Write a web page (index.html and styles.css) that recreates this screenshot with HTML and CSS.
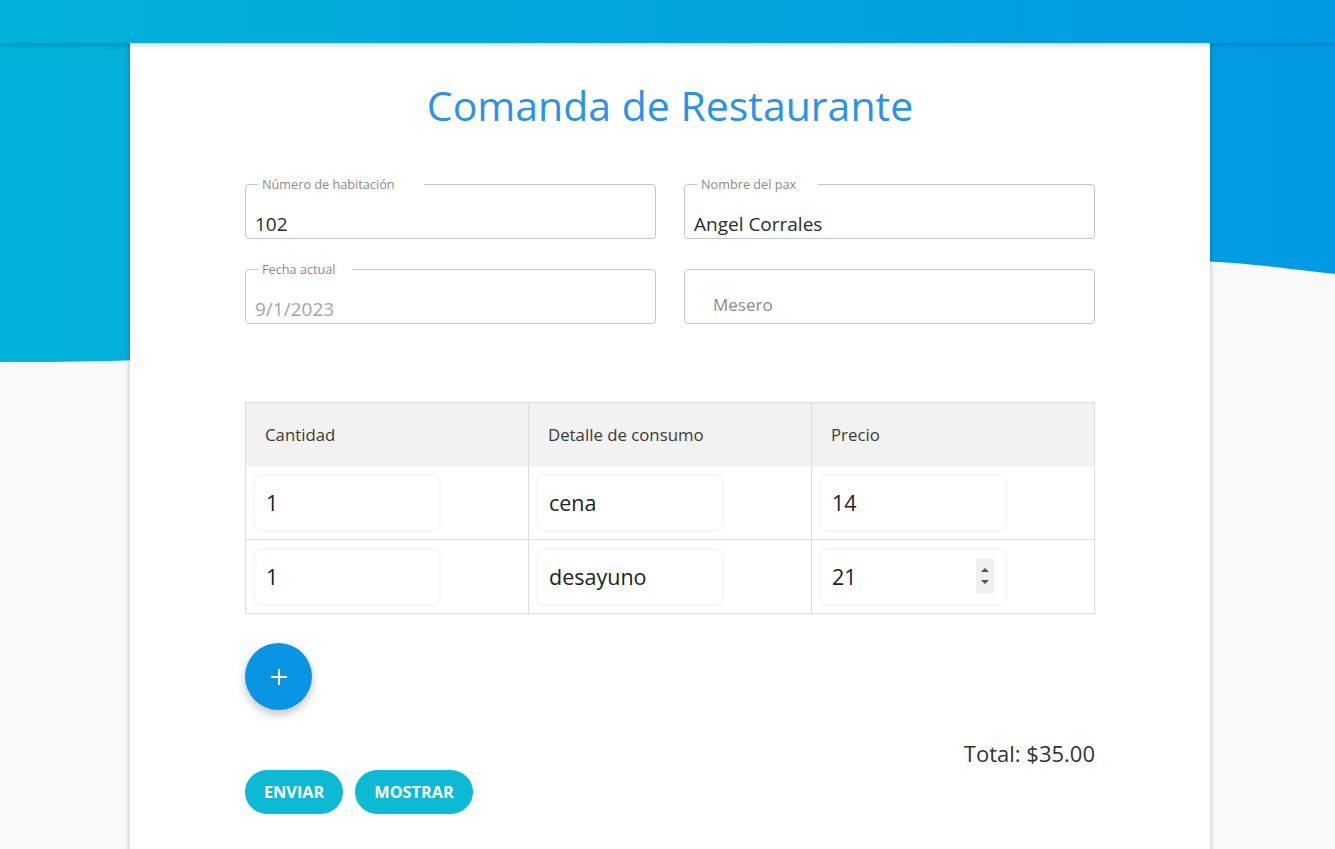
FILE: index.html
```html
<!DOCTYPE html>
<html lang="es">
<head>
<meta charset="utf-8">
<title>Comanda de Restaurante</title>
<link rel="stylesheet" href="styles.css">
</head>
<body>
<svg class="wave" viewBox="0 0 1335 380" preserveAspectRatio="none" aria-hidden="true">
  <defs>
    <linearGradient id="g" x1="0" y1="0" x2="1" y2="0">
      <stop offset="0" stop-color="#02b2d9"/>
      <stop offset="1" stop-color="#029ae3"/>
    </linearGradient>
  </defs>
  <path d="M0,0 H1335 V274 C1260,266 1220,258 1150,262 C800,285 400,365 0,362 Z" fill="url(#g)"/>
</svg>
<header class="topbar"></header>
<main class="card">
  <h1 class="title">Comanda de Restaurante</h1>
  <div class="fields">
    <fieldset class="field">
      <legend class="field-label field-label--wide"><span>Número de habitación</span></legend>
      <div class="field-value">102</div>
    </fieldset>
    <fieldset class="field">
      <legend class="field-label"><span>Nombre del pax</span></legend>
      <div class="field-value">Angel Corrales</div>
    </fieldset>
    <fieldset class="field">
      <legend class="field-label field-label--narrow"><span>Fecha actual</span></legend>
      <div class="field-value field-value--disabled">9/1/2023</div>
    </fieldset>
    <fieldset class="field field--plain">
      <div class="field-placeholder">Mesero</div>
    </fieldset>
  </div>

  <table class="items">
    <thead>
      <tr><th>Cantidad</th><th>Detalle de consumo</th><th>Precio</th></tr>
    </thead>
    <tbody>
      <tr>
        <td><div class="cell-input">1</div></td>
        <td><div class="cell-input">cena</div></td>
        <td><div class="cell-input">14</div></td>
      </tr>
      <tr>
        <td><div class="cell-input">1</div></td>
        <td><div class="cell-input">desayuno</div></td>
        <td><div class="cell-input cell-input--number">21
          <span class="spinner"><span class="spin-up"></span><span class="spin-down"></span></span>
        </div></td>
      </tr>
    </tbody>
  </table>

  <button class="fab" aria-label="Agregar">
    <svg width="20" height="20" viewBox="0 0 20 20"><path d="M10 2 V18 M2 10 H18" stroke="#fff" stroke-width="2"/></svg>
  </button>

  <div class="total">Total: $35.00</div>

  <div class="actions">
    <button class="pill">ENVIAR</button>
    <button class="pill">MOSTRAR</button>
  </div>
</main>
</body>
</html>
```
FILE: styles.css
```css
* { box-sizing: border-box; }
html, body { margin: 0; padding: 0; }
body {
  background: #f9f9f9;
  font-family: "Open Sans", "Noto Sans", sans-serif;
  color: #333;
  min-height: 849px;
  position: relative;
  overflow: hidden;
}
.wave {
  position: absolute;
  left: 0;
  top: 0;
  width: 1335px;
  height: 380px;
  z-index: 0;
}
.topbar {
  position: relative;
  z-index: 2;
  height: 43px;
  background: linear-gradient(90deg, #02b2d9, #029ae3);
  box-shadow: 0 2px 5px rgba(0,0,0,0.18);
}
.card {
  position: relative;
  z-index: 1;
  width: 1080px;
  margin: 0 0 0 130px;
  background: #fff;
  box-shadow: 0 0 6px rgba(0,0,0,0.25);
  padding: 32px 115px 40px;
  min-height: 830px;
}
.title {
  margin: 0;
  text-align: center;
  font-weight: 400;
  font-size: 41px;
  line-height: 60px;
  color: #2a93e6;
}
.fields {
  margin-top: 49px;
  display: grid;
  grid-template-columns: 411px 411px;
  column-gap: 28px;
  row-gap: 30px;
}
.field {
  margin: 0;
  border: 1px solid #c4c4c4;
  border-radius: 4px;
  height: 63px;
  padding: 0 9px;
  position: relative;
  margin-top: -8px;
}
.field-label {
  padding: 0 22px 0 4px;
  margin-left: 3px;
  font-size: 12.7px;
  line-height: 16px;
  color: #8a8a8a;
}
.field-label--wide { padding-right: 29px; }
.field-label--narrow { padding-right: 16px; }
.field-value {
  font-size: 19px;
  line-height: 26px;
  margin-top: 19px;
  color: #2b2b2b;
}
.field-value--disabled { color: #a5a5a5; }
.field--plain {
  margin-top: 0;
  height: 55px;
}
.field-placeholder {
  font-size: 17px;
  line-height: 22px;
  color: #8a8a8a;
  padding-left: 19px;
  margin-top: 24px;
}
.items {
  margin-top: 78px;
  width: 850px;
  border-collapse: collapse;
  table-layout: fixed;
}
.items th, .items td {
  border: 1px solid #dcdcdc;
  width: 283px;
}
.items thead th {
  background: #f2f2f2;
  height: 63px;
  text-align: left;
  font-weight: 400;
  font-size: 16.8px;
  padding: 0 19px;
  color: #3a3a3a;
  border-bottom: 1px solid #eef2f7;
}
.items tbody td {
  height: 74px;
  padding: 0 9px;
}
.cell-input {
  position: relative;
  width: 184px;
  height: 54px;
  background: #fff;
  border-radius: 6px;
  box-shadow: 0 0 4px rgba(0,0,0,0.1);
  font-size: 21.5px;
  line-height: 54px;
  padding-left: 11px;
  color: #222;
}
.spinner {
  position: absolute;
  right: 11px;
  top: 9px;
  width: 18px;
  height: 34px;
  background: #efefef;
  display: flex;
  flex-direction: column;
  align-items: center;
  justify-content: center;
  gap: 8px;
}
.spin-up {
  width: 0; height: 0;
  border-left: 4px solid transparent;
  border-right: 4px solid transparent;
  border-bottom: 4px solid #555;
}
.spin-down {
  width: 0; height: 0;
  border-left: 4px solid transparent;
  border-right: 4px solid transparent;
  border-top: 4px solid #555;
}
.fab {
  margin-top: 29px;
  width: 67px;
  height: 67px;
  border-radius: 50%;
  border: none;
  background: #0a95e4;
  box-shadow: 0 4px 10px rgba(0,0,0,0.25);
  display: flex;
  align-items: center;
  justify-content: center;
  padding: 0;
}
.total {
  width: 850px;
  text-align: right;
  font-size: 22px;
  line-height: 30px;
  margin-top: 28px;
  color: #333;
}
.actions {
  display: flex;
  gap: 12px;
  margin-top: 2px;
}
.pill {
  height: 44px;
  border: none;
  border-radius: 22px;
  background: #0cbad5;
  color: #fff;
  font-family: "Open Sans", "Noto Sans", sans-serif;
  font-weight: 700;
  font-size: 16.3px;
  padding: 0 19px;
}
```
